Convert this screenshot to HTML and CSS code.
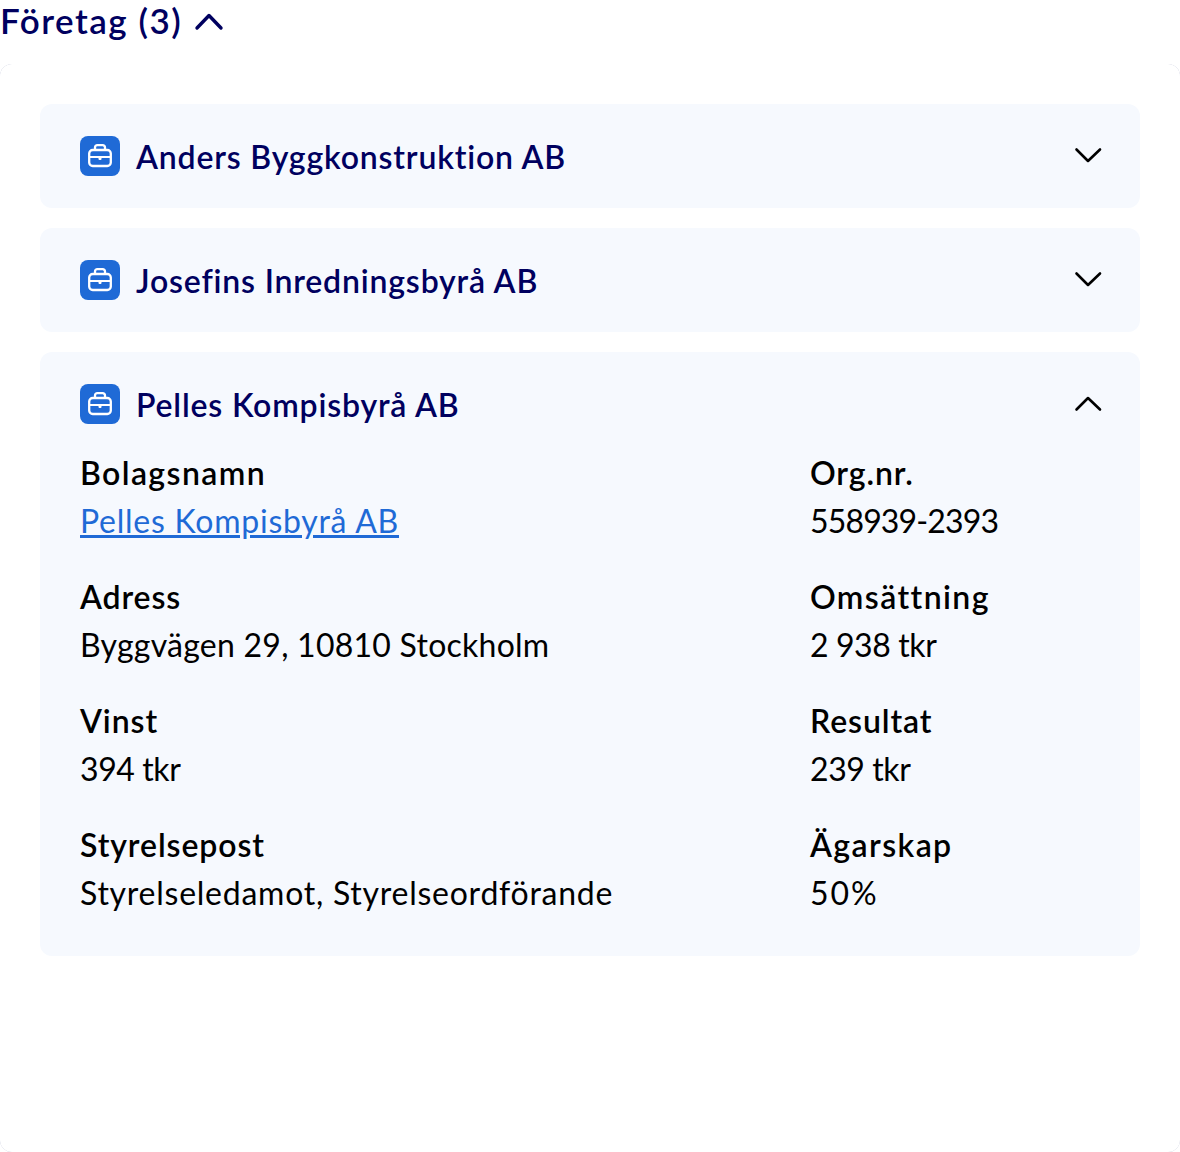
FILE: index.html
```html
<!DOCTYPE html>
<html lang="sv">
<head>
<meta charset="utf-8">
<title>Företag</title>
<link rel="stylesheet" href="styles.css">
</head>
<body>
<button class="toggle" type="button">
  <span class="toggle-text">Företag (3)</span>
  <svg class="toggle-icon" width="32" height="32" viewBox="0 0 32 32" fill="none"><path d="M3 22 L15 9.500 L27 22" stroke="#00005f" stroke-width="3.400" stroke-linecap="round" stroke-linejoin="round"/></svg>
</button>
<div class="panel-back">
<main class="panel">
  <section class="card">
    <header class="card-head">
      <svg class="brief" width="40" height="40" viewBox="0 0 40 40"><use href="#briefcase"/></svg>
      <h2 class="card-title">Anders Byggkonstruktion AB</h2>
      <svg class="chev" width="32" height="32" viewBox="0 0 32 32" fill="none"><path d="M4.500 9.500 L16 21 L28 9.500" stroke="#000" stroke-width="2.600" stroke-linecap="round" stroke-linejoin="round"/></svg>
    </header>
  </section>
  <section class="card">
    <header class="card-head">
      <svg class="brief" width="40" height="40" viewBox="0 0 40 40"><use href="#briefcase"/></svg>
      <h2 class="card-title">Josefins Inredningsbyrå AB</h2>
      <svg class="chev" width="32" height="32" viewBox="0 0 32 32" fill="none"><path d="M4.500 9.500 L16 21 L28 9.500" stroke="#000" stroke-width="2.600" stroke-linecap="round" stroke-linejoin="round"/></svg>
    </header>
  </section>
  <section class="card">
    <header class="card-head">
      <svg class="brief" width="40" height="40" viewBox="0 0 40 40"><use href="#briefcase"/></svg>
      <h2 class="card-title">Pelles Kompisbyrå AB</h2>
      <svg class="chev" width="32" height="32" viewBox="0 0 32 32" fill="none"><path d="M4.500 21.500 L16 10 L28 21.500" stroke="#000" stroke-width="2.600" stroke-linecap="round" stroke-linejoin="round"/></svg>
    </header>
    <dl class="facts">
      <div class="fact"><dt class="wide">Bolagsnamn</dt><dd><a href="#">Pelles Kompisbyrå AB</a></dd></div>
      <div class="fact"><dt>Org.nr.</dt><dd class="id">558939-2393</dd></div>
      <div class="fact"><dt>Adress</dt><dd class="addr">Byggvägen 29, 10810 Stockholm</dd></div>
      <div class="fact"><dt class="wide">Omsättning</dt><dd class="num">2 938 tkr</dd></div>
      <div class="fact"><dt>Vinst</dt><dd class="num">394 tkr</dd></div>
      <div class="fact"><dt>Resultat</dt><dd class="num">239 tkr</dd></div>
      <div class="fact"><dt>Styrelsepost</dt><dd>Styrelseledamot, Styrelseordförande</dd></div>
      <div class="fact"><dt class="wide">Ägarskap</dt><dd class="pct">50%</dd></div>
    </dl>
  </section>
</main>
</div>
<svg class="defs" width="0" height="0">
  <symbol id="briefcase" viewBox="0 0 40 40">
    <rect width="40" height="40" rx="8" fill="#1f6ad6"/>
    <rect x="9.200" y="14" width="21.600" height="16" rx="3.500" fill="none" stroke="#fff" stroke-width="2.300"/>
    <path d="M15 14 V11.500 A2.300 2.300 0 0 1 17.300 9.200 H22.700 A2.300 2.300 0 0 1 25 11.500 V14" fill="none" stroke="#fff" stroke-width="2.300"/>
    <path d="M9 21 H31" stroke="#fff" stroke-width="2"/>
    <rect x="18.500" y="20" width="3" height="4" rx="1" fill="#fff"/>
  </symbol>
</svg>
</body>
</html>
```

FILE: styles.css
```css
* { box-sizing: border-box; }
html, body { margin: 0; padding: 0; background: #fff; }
body { font-family: "Lato", "Inter", sans-serif; width: 1180px; height: 1152px; overflow: hidden; color: #000; }
.toggle { display: flex; align-items: center; gap: 12px; height: 44px; margin: 0; padding: 0; background: none; border: 0; font: inherit; color: #00005f; }
.toggle-text { font-size: 35px; line-height: 40px; font-weight: 600; letter-spacing: 1.5px; padding-bottom: 4px; }
.toggle-icon { display: block; }
.panel-back { margin-top: 20px; height: 1088px; border-radius: 12px; background: #b4b9d0; }
.panel { height: 100%; padding: 40px; border-radius: 12px; display: flex; flex-direction: column; gap: 20px; background: #fff; }
.card { background: #f6f9fe; border-radius: 12px; padding: 32px 40px; }
.card-head { display: flex; align-items: center; height: 40px; }
.brief { flex: none; display: block; }
.card-title { flex: 1; margin: 0 0 0 16px; padding-top: 2px; font-size: 32px; line-height: 40px; font-weight: 600; letter-spacing: 0.82px; color: #00005f; }
.chev { flex: none; margin-right: -4px; display: block; }
.facts { display: grid; grid-template-columns: 730px 1fr; row-gap: 28px; margin: 25px 0 7px; }
.fact { min-width: 0; }
dt { font-size: 32px; line-height: 48px; font-weight: 600; letter-spacing: 0.9px; }
dt.wide { letter-spacing: 1.4px; }
dd { margin: 0; font-size: 32px; line-height: 48px; font-weight: 400; letter-spacing: 0.75px; white-space: nowrap; }
dd.num { letter-spacing: -0.4px; }
dd.id { letter-spacing: -0.85px; }
dd.addr { letter-spacing: 0.25px; }
dd.pct { letter-spacing: 2px; }
a { color: #1f6ad6; }
.defs { position: absolute; }
```
